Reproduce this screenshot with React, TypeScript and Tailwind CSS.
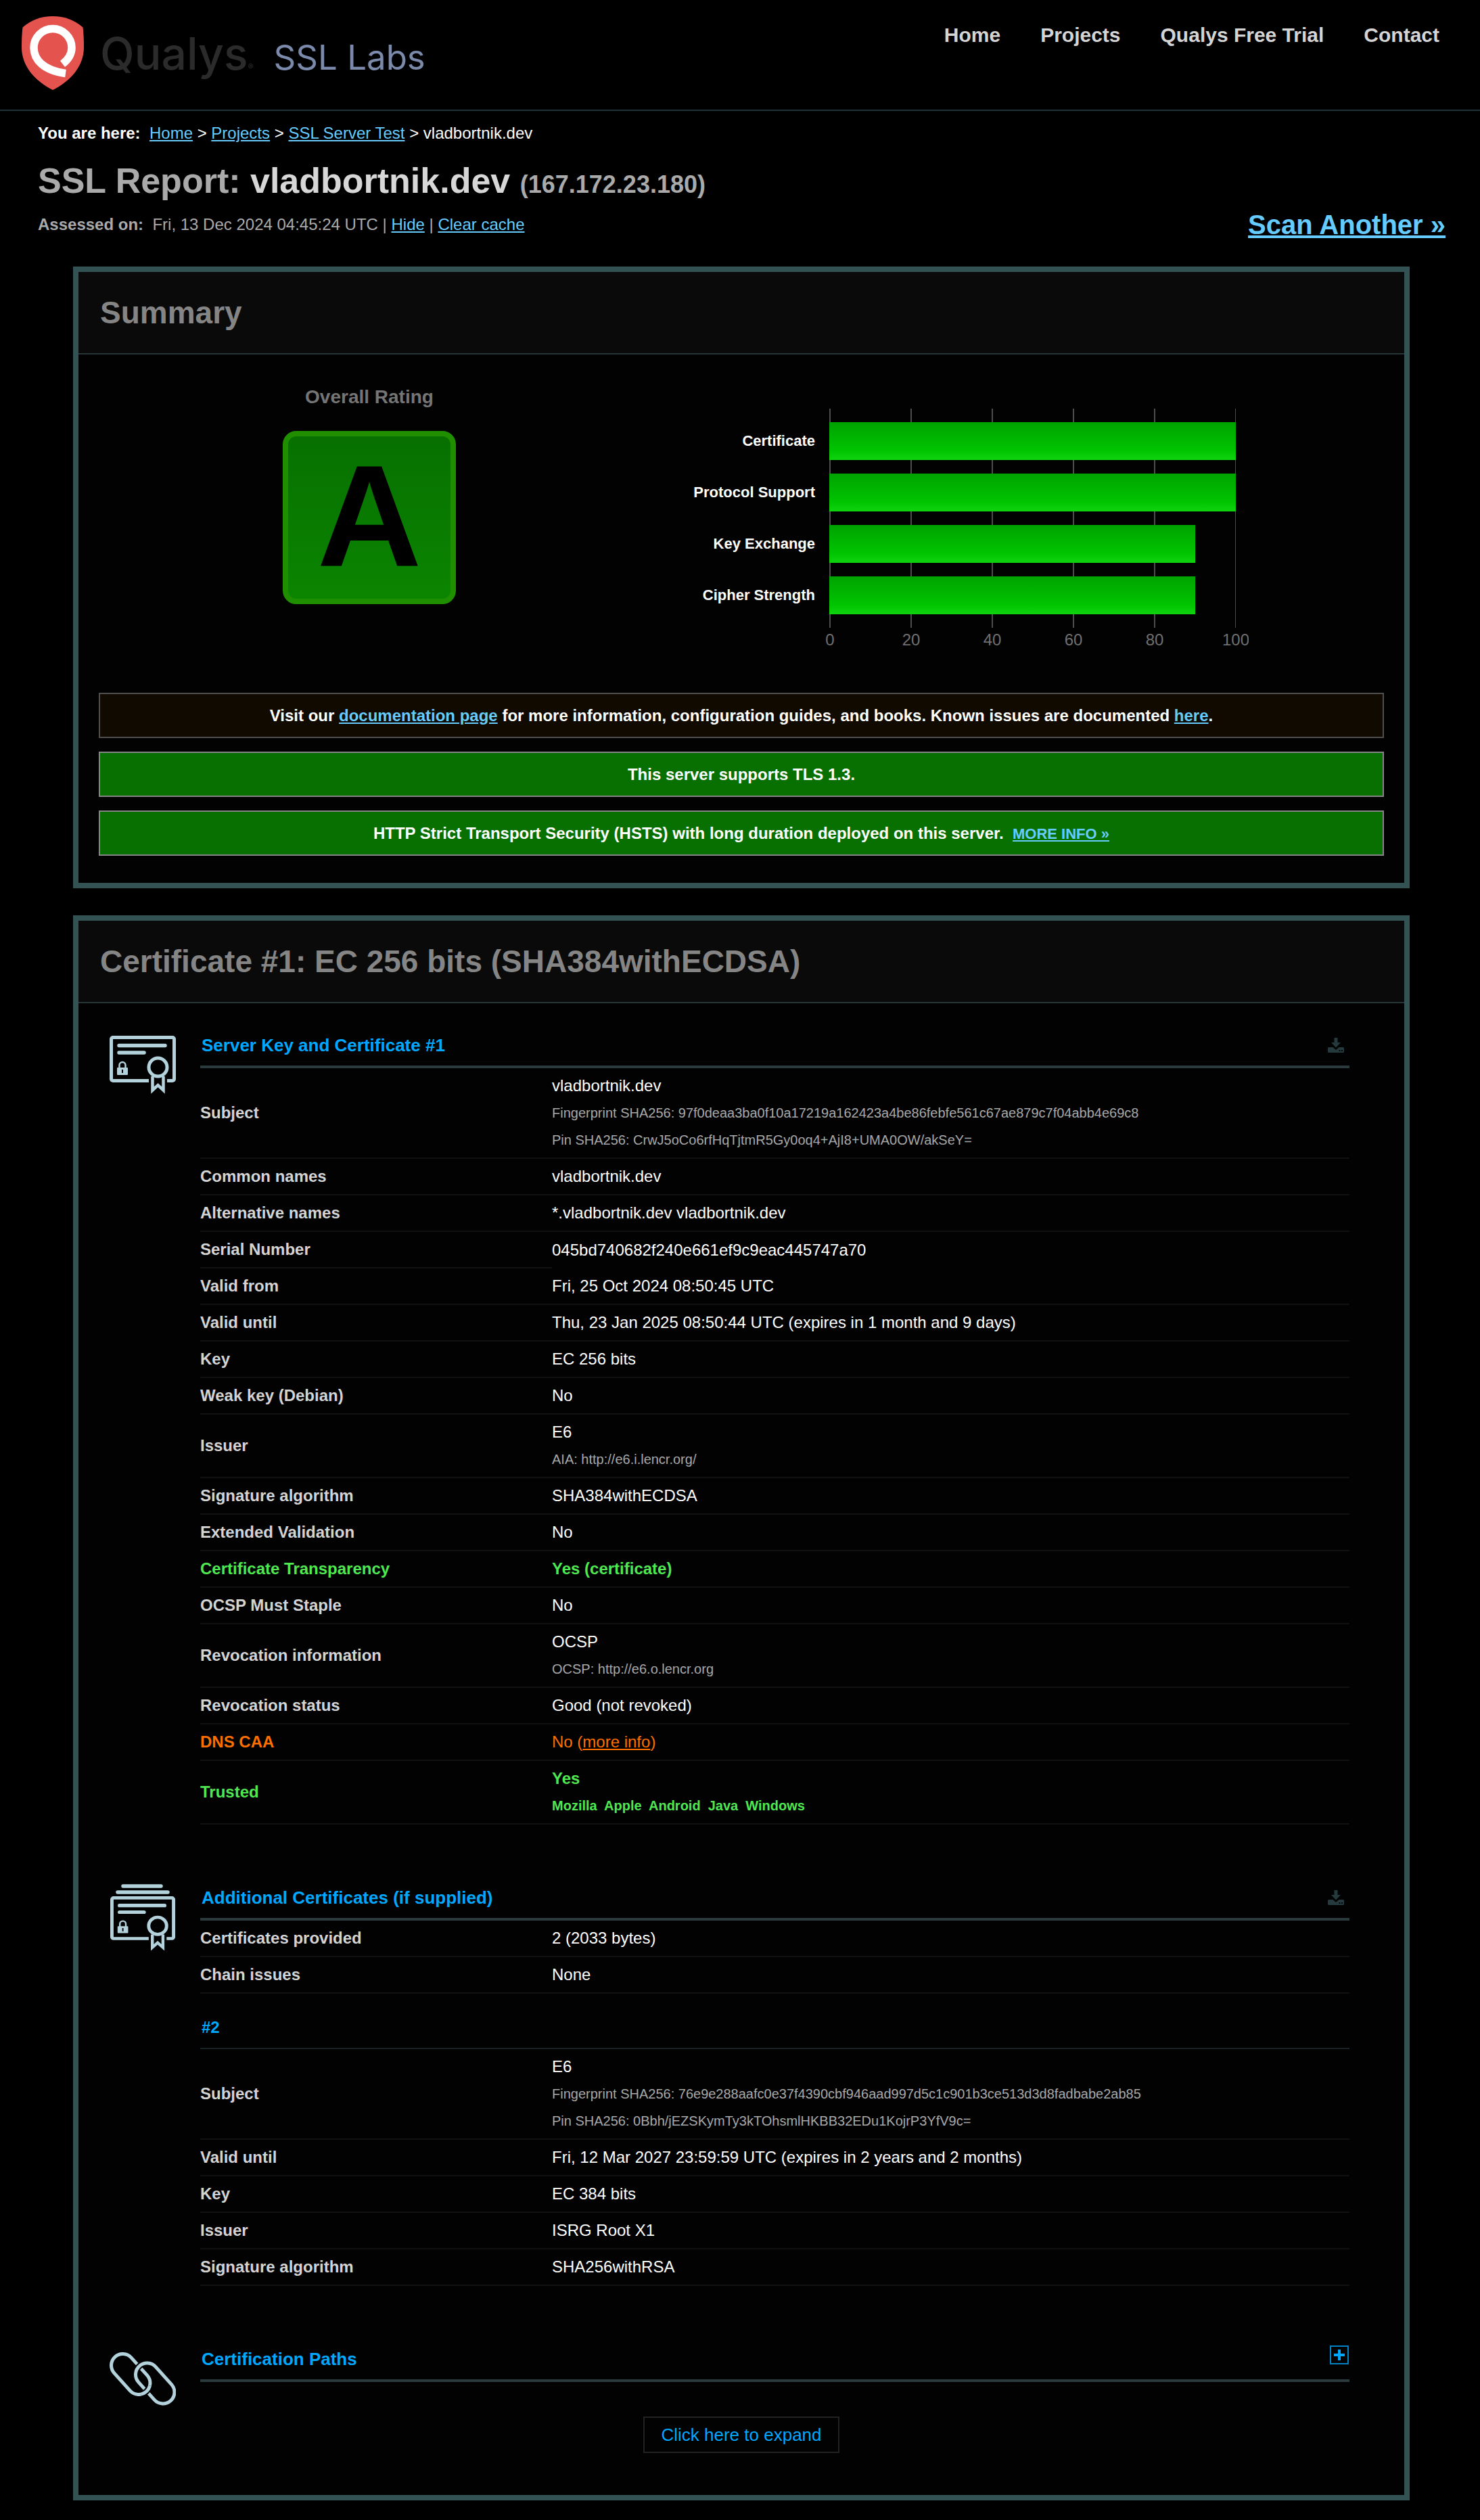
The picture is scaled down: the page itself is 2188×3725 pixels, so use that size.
import type { ReactNode } from "react";

type Tone = "plain" | "good" | "warn";

type Row = {
  label: string;
  value: ReactNode;
  notes?: string[];
  tone?: Tone;
  openEnd?: boolean;
};

const labelTone: Record<Tone, string> = {
  plain: "text-[#d4d4d4]",
  good: "text-[#50e850]",
  warn: "text-[#ff6f00]",
};

const valueTone: Record<Tone, string> = {
  plain: "text-white",
  good: "text-[#50e850] font-bold",
  warn: "text-[#ff6f00]",
};

const noteTone: Record<Tone, string> = {
  plain: "text-[#a8a8a8]",
  good: "text-[#50e850]",
  warn: "text-[#ff6f00]",
};

const link = "text-[#66ccff] underline";

const serverRows: Row[] = [
  {
    label: "Subject",
    value: "vladbortnik.dev",
    notes: [
      "Fingerprint SHA256: 97f0deaa3ba0f10a17219a162423a4be86febfe561c67ae879c7f04abb4e69c8",
      "Pin SHA256: CrwJ5oCo6rfHqTjtmR5Gy0oq4+AjI8+UMA0OW/akSeY=",
    ],
  },
  { label: "Common names", value: "vladbortnik.dev" },
  { label: "Alternative names", value: "*.vladbortnik.dev vladbortnik.dev" },
  { label: "Serial Number", value: "045bd740682f240e661ef9c9eac445747a70", openEnd: true },
  { label: "Valid from", value: "Fri, 25 Oct 2024 08:50:45 UTC" },
  { label: "Valid until", value: "Thu, 23 Jan 2025 08:50:44 UTC (expires in 1 month and 9 days)" },
  { label: "Key", value: "EC 256 bits" },
  { label: "Weak key (Debian)", value: "No" },
  { label: "Issuer", value: "E6", notes: ["AIA: http://e6.i.lencr.org/"] },
  { label: "Signature algorithm", value: "SHA384withECDSA" },
  { label: "Extended Validation", value: "No" },
  { label: "Certificate Transparency", value: "Yes (certificate)", tone: "good" },
  { label: "OCSP Must Staple", value: "No" },
  { label: "Revocation information", value: "OCSP", notes: ["OCSP: http://e6.o.lencr.org"] },
  { label: "Revocation status", value: "Good (not revoked)" },
  {
    label: "DNS CAA",
    value: (
      <>
        No (<a href="#caa" className="underline">more info</a>)
      </>
    ),
    tone: "warn",
  },
  {
    label: "Trusted",
    value: "Yes",
    notes: ["Mozilla\u00a0 Apple\u00a0 Android\u00a0 Java\u00a0 Windows"],
    tone: "good",
  },
];

const chainRows: Row[] = [
  { label: "Certificates provided", value: "2 (2033 bytes)" },
  { label: "Chain issues", value: "None" },
];

const issuerRows: Row[] = [
  {
    label: "Subject",
    value: "E6",
    notes: [
      "Fingerprint SHA256: 76e9e288aafc0e37f4390cbf946aad997d5c1c901b3ce513d3d8fadbabe2ab85",
      "Pin SHA256: 0Bbh/jEZSKymTy3kTOhsmlHKBB32EDu1KojrP3YfV9c=",
    ],
  },
  { label: "Valid until", value: "Fri, 12 Mar 2027 23:59:59 UTC (expires in 2 years and 2 months)" },
  { label: "Key", value: "EC 384 bits" },
  { label: "Issuer", value: "ISRG Root X1" },
  { label: "Signature algorithm", value: "SHA256withRSA" },
];

const scores = [
  { label: "Certificate", score: 100 },
  { label: "Protocol Support", score: 100 },
  { label: "Key Exchange", score: 90 },
  { label: "Cipher Strength", score: 90 },
];

function Shield() {
  return (
    <svg width="92" height="109" viewBox="0 0 92 109" aria-hidden="true">
      <path
        d="M1.5 16.5Q20 0 46 0T90.5 16.5Q92 28 92 46C92 74 72 96 46 109C20 96 0 74 0 46Q0 28 1.5 16.5Z"
        fill="#e5534f"
      />
      <path
        d="M60.5 70.5C69 64 74 56 74 46.5A28 28 0 0 0 18 46.5C18 64 32 80 65 84.5"
        fill="none"
        stroke="#fff"
        strokeWidth="11.5"
      />
    </svg>
  );
}

function CardArt() {
  return (
    <g fill="none" stroke="#b4d2dc">
      <path
        d="M58 66.5H5A2.5 2.5 0 0 1 2.5 64V5A2.5 2.5 0 0 1 5 2.5H93A2.5 2.5 0 0 1 95.5 5V64A2.5 2.5 0 0 1 93 66.5H85"
        strokeWidth="5"
      />
      <path d="M14 14.5H82M14 25H51" strokeWidth="5.5" strokeLinecap="round" />
      <circle cx="71.5" cy="46.5" r="13.5" strokeWidth="5" />
      <path d="M63.5 60V80.5L71.5 73L79.5 80.5V60" strokeWidth="4.5" />
      <path d="M14.5 48V43.5A4.5 4.5 0 0 1 23.5 43.5V48" strokeWidth="2.5" />
      <path
        d="M12 47H26Q27 47 27 48V57Q27 58 26 58H12Q11 58 11 57V48Q11 47 12 47ZM18 50V55H20V50Z"
        fill="#b4d2dc"
        fillRule="evenodd"
        stroke="none"
      />
    </g>
  );
}

function CertificateIcon() {
  return (
    <svg width="98" height="87" viewBox="0 0 98 87" aria-hidden="true">
      <CardArt />
    </svg>
  );
}

function CertificateStackIcon() {
  return (
    <svg width="98" height="99" viewBox="0 0 98 99" aria-hidden="true">
      <path d="M20 3H76M12 12H86" stroke="#b4d2dc" strokeWidth="5.5" strokeLinecap="round" />
      <g transform="translate(1 18) scale(.98 .94)">
        <CardArt />
      </g>
    </svg>
  );
}

function ChainIcon() {
  return (
    <svg width="98" height="79" viewBox="0 0 98 79" fill="none" aria-hidden="true">
      <defs>
        <rect id="chain-link" x="-17" y="-17" width="69" height="34" rx="17" />
        <clipPath id="chain-over">
          <circle cx="57" cy="60" r="11" />
        </clipPath>
      </defs>
      <use href="#chain-link" transform="translate(19.5 19.5) rotate(48)" stroke="#b4d2dc" strokeWidth="5" />
      <use href="#chain-link" transform="translate(55.5 33) rotate(48)" stroke="#020202" strokeWidth="9" />
      <use href="#chain-link" transform="translate(55.5 33) rotate(48)" stroke="#b4d2dc" strokeWidth="5" />
      <g clipPath="url(#chain-over)">
        <use href="#chain-link" transform="translate(19.5 19.5) rotate(48)" stroke="#020202" strokeWidth="9" />
        <use href="#chain-link" transform="translate(19.5 19.5) rotate(48)" stroke="#b4d2dc" strokeWidth="5" />
      </g>
    </svg>
  );
}

function DownloadIcon() {
  return (
    <svg width="24" height="22" viewBox="0 0 24 22" fill="#243a3d" aria-hidden="true">
      <path d="M9.5 0H14.5V7H19L12 14.5L5 7H9.5Z" />
      <path
        fillRule="evenodd"
        d="M1.5 14H7.5L12 18L16.5 14H22.5Q24 14 24 15.5V20.5Q24 22 22.5 22H1.5Q0 22 0 20.5V15.5Q0 14 1.5 14ZM16.5 18V20H18.5V18ZM20 18V20H22V18Z"
      />
    </svg>
  );
}

function PlusBoxIcon() {
  return (
    <svg width="28" height="28" viewBox="0 0 28 28" fill="none" aria-hidden="true">
      <rect x="1" y="1" width="26" height="26" stroke="#0082c4" strokeWidth="2" />
      <path d="M6 14H22M14 6V22" stroke="#00a8ff" strokeWidth="4" />
    </svg>
  );
}

function ScoreChart() {
  const ticks = [0, 20, 40, 60, 80, 100];
  return (
    <svg width="900" height="360" viewBox="0 0 900 360" role="img" aria-label="Score by category">
      <defs>
        <linearGradient id="bar" x1="0" y1="0" x2="0" y2="1">
          <stop offset="0" stopColor="#00a300" />
          <stop offset="0.75" stopColor="#00c400" />
          <stop offset="1" stopColor="#0fd40f" />
        </linearGradient>
      </defs>
      {ticks.map((t) => (
        <g key={t}>
          <rect x={280 + t * 6} y="0" width={t === 100 ? 1 : 2} height="324" fill="#4d4d4d" />
          <text x={281 + t * 6} y="350" textAnchor="middle" fill="#707070" fontSize="24">
            {t}
          </text>
        </g>
      ))}
      {scores.map((s, i) => (
        <g key={s.label}>
          <rect x="280" y={20 + i * 76} width={s.score * 6 + 1} height="56" fill="url(#bar)" />
          <text x="259" y={55 + i * 76} textAnchor="end" fill="#fff" fontSize="22" fontWeight="700">
            {s.label}
          </text>
        </g>
      ))}
    </svg>
  );
}

function Panel({ title, children }: { title: string; children: ReactNode }) {
  return (
    <section className="border-8 border-[#335254] bg-[#020202]">
      <h2 className="flex h-[122px] items-center border-b-2 border-[#263638] bg-[#0a0a0a] px-8 text-[46px] font-bold text-[#858585]">
        {title}
      </h2>
      {children}
    </section>
  );
}

function Notice({ kind, children }: { kind: "info" | "good"; children: ReactNode }) {
  const look = kind === "info" ? "border-[#4f4f4f] bg-[#110a00]" : "border-[#858585] bg-[#087000]";
  return (
    <p className={`flex h-[67px] items-center justify-center border-2 text-2xl font-bold text-white ${look}`}>
      <span>{children}</span>
    </p>
  );
}

function DetailTable({ rows, name }: { rows: Row[]; name: string }) {
  return (
    <table className="w-full table-fixed border-collapse text-2xl leading-10" aria-label={name}>
      <colgroup>
        <col className="w-[520px]" />
        <col />
      </colgroup>
      <tbody>
        {rows.map((r) => {
          const tone = r.tone ?? "plain";
          return (
            <tr key={r.label}>
              <th
                scope="row"
                className={`border-b-2 border-[#101010] py-1.5 text-left align-middle leading-10 font-bold ${labelTone[tone]}`}
              >
                {r.label}
              </th>
              <td className={`py-1.5 ${r.openEnd ? "" : "border-b-2 border-[#101010]"} ${valueTone[tone]}`}>
                <div>{r.value}</div>
                {r.notes?.map((n) => (
                  <div key={n} className={`text-[20px] leading-10 ${noteTone[tone]}`}>
                    {n}
                  </div>
                ))}
              </td>
            </tr>
          );
        })}
      </tbody>
    </table>
  );
}

function Block({
  icon,
  title,
  action,
  children,
}: {
  icon: ReactNode;
  title: string;
  action: ReactNode;
  children?: ReactNode;
}) {
  return (
    <div className="flex items-start gap-9 pr-[81px] pl-[46px]">
      <div className="w-[98px] shrink-0">{icon}</div>
      <div className="min-w-0 flex-1">
        <div className="flex items-center justify-between border-b-4 border-[#2b3b3d] pb-2.5 pl-0.5">
          <h3 className="text-[26px] leading-10 font-bold text-[#00a8ff]">{title}</h3>
          {action}
        </div>
        {children}
      </div>
    </div>
  );
}

export default function App() {
  return (
    <div className="min-h-screen bg-black pb-7 font-['Liberation_Sans',Arial,sans-serif] text-white">
      <header className="flex h-[164px] items-start justify-between border-b-2 border-[#1d3437] pr-[60px] pl-8">
        <a href="#home" className="flex items-start gap-6 pt-6" aria-label="Qualys SSL Labs">
          <Shield />
          <span className="flex items-baseline gap-[30px] pt-[23px] font-['Inter',sans-serif] leading-[64px]">
            <span className="text-[66px] font-medium text-[#2b2b2b]">
              Qualys<span className="text-[12px]">®</span>
            </span>
            <span className="text-[51px] font-normal text-[#7b8aaa]">SSL Labs</span>
          </span>
        </a>
        <nav className="flex gap-[59px] pt-8 text-[30px] leading-10 font-bold text-[#d4d4d4]">
          <a href="#home">Home</a>
          <a href="#projects">Projects</a>
          <a href="#trial">Qualys Free Trial</a>
          <a href="#contact">Contact</a>
        </nav>
      </header>

      <div className="pt-[17px] pr-[51px] pl-14">
        <p className="text-2xl">
          <b>You are here: </b>&nbsp;
          <a href="#home" className={link}>Home</a> &gt; <a href="#projects" className={link}>Projects</a> &gt;{" "}
          <a href="#test" className={link}>SSL Server Test</a> &gt; vladbortnik.dev
        </p>
        <h1 className="mt-6 text-[52px] leading-[60px] font-bold text-[#aaaaaa]">
          SSL Report: <span className="text-[#d7d7d7]">vladbortnik.dev</span>{" "}
          <span className="text-[36px] leading-none">(167.172.23.180)</span>
        </h1>
        <div className="mt-[11px] flex items-center justify-between">
          <p className="text-2xl text-[#aaaaaa]">
            <b>Assessed on: </b>&nbsp;Fri, 13 Dec 2024 04:45:24 UTC | <a href="#hide" className={link}>Hide</a> |{" "}
            <a href="#clear" className={link}>Clear cache</a>
          </p>
          <a href="#scan" className="text-[40px] leading-[48px] font-bold text-[#66ccff] underline">
            Scan Another »
          </a>
        </div>
      </div>

      <main className="mt-[38px] mr-[104px] ml-[108px] flex flex-col gap-10">
        <Panel title="Summary">
          <div className="px-[30px] pt-[43px] pb-10">
            <div className="flex items-start">
              <div className="flex w-[800px] flex-col items-center">
                <div className="text-[28px] leading-10 font-bold text-[#757575]">Overall Rating</div>
                <div className="mt-[30px] flex size-64 items-center justify-center rounded-[20px] border-8 border-[#1f8f00] bg-linear-to-b from-[#077000] to-[#0b8500] pb-1 text-[214px] leading-none font-bold text-black">
                  A
                </div>
              </div>
              <div className="mt-[37px]">
                <ScoreChart />
              </div>
            </div>
            <div className="mt-[60px] flex flex-col gap-5">
              <Notice kind="info">
                Visit our <a href="#docs" className={link}>documentation page</a> for more information, configuration
                guides, and books. Known issues are documented <a href="#issues" className={link}>here</a>.
              </Notice>
              <Notice kind="good">This server supports TLS 1.3.</Notice>
              <Notice kind="good">
                HTTP Strict Transport Security (HSTS) with long duration deployed on this server.&nbsp;{" "}
                <a href="#hsts" className="text-[22px] text-[#66ccff] underline">MORE INFO »</a>
              </Notice>
            </div>
          </div>
        </Panel>

        <Panel title="Certificate #1: EC 256 bits (SHA384withECDSA)">
          <div className="flex flex-col gap-[88px] pt-[42px]">
            <Block
              icon={<div className="pt-1.5"><CertificateIcon /></div>}
              title="Server Key and Certificate #1"
              action={<a href="#download" aria-label="Download certificate" className="mr-2"><DownloadIcon /></a>}
            >
              <DetailTable rows={serverRows} name="Server Key and Certificate" />
            </Block>

            <Block
              icon={<CertificateStackIcon />}
              title="Additional Certificates (if supplied)"
              action={<a href="#download-chain" aria-label="Download chain" className="mr-2"><DownloadIcon /></a>}
            >
              <DetailTable rows={chainRows} name="Additional Certificates" />
              <h4 className="border-b-2 border-[#182124] pt-[30px] pb-2.5 pl-0.5 text-2xl leading-10 font-bold text-[#00a8ff]">
                #2
              </h4>
              <DetailTable rows={issuerRows} name="Certificate 2" />
            </Block>

            <Block
              icon={<div className="pt-2.5"><ChainIcon /></div>}
              title="Certification Paths"
              action={<button type="button" aria-label="Expand paths" className="mr-px mb-3"><PlusBoxIcon /></button>}
            />
          </div>
          <div className="mt-4 mb-[62px] flex justify-center">
            <button type="button" className="h-[54px] border-2 border-[#222222] px-6 text-[26px] text-[#00a8ff]">
              Click here to expand
            </button>
          </div>
        </Panel>
      </main>
    </div>
  );
}
